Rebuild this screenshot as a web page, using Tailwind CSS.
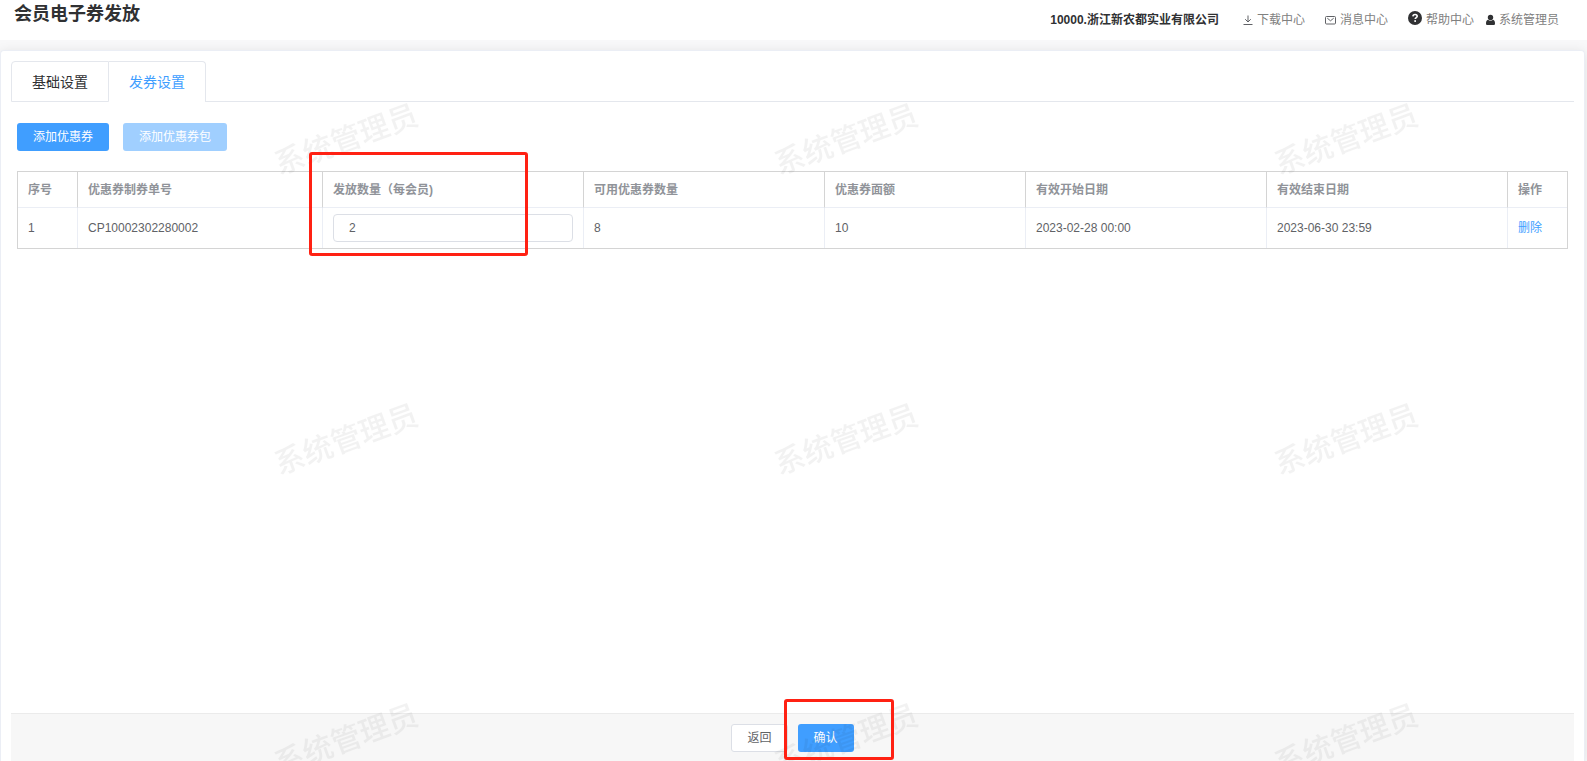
<!DOCTYPE html>
<html lang="zh-CN">
<head>
<meta charset="utf-8">
<meta name="viewport" content="width=device-width, initial-scale=1">
<title>会员电子券发放</title>
<script src="https://cdn.jsdelivr.net/npm/@tailwindcss/browser@4"></script>
</head>
<body class="relative flex min-h-screen flex-col overflow-x-hidden bg-[#f8f8f9] font-['Liberation_Sans','Noto_Sans_CJK_SC',sans-serif] text-xs text-[#606266]">
  <header class="flex h-10 items-center justify-between bg-white pr-7 pl-3.5">
    <h1 class="mb-3 text-lg leading-6 font-bold text-[#303133]">会员电子券发放</h1>
    <nav class="flex items-center leading-4 text-[#808080]">
      <strong class="mr-6 text-[#303133]">10000.浙江新农都实业有限公司</strong>
      <a href="#" class="mr-5 flex items-center gap-1">
        <svg class="size-2.5" viewBox="0 0 10 10" fill="none" stroke="#606266"><path d="M5 .5V7M2.200 4.200 5 7l2.800-2.800M.5 9.500h9"/></svg>下载中心</a>
      <a href="#" class="mr-5 flex items-center gap-1">
        <svg class="h-2.5 w-[11px]" viewBox="0 0 11 10" fill="none" stroke="#606266"><rect x=".5" y="1.500" width="10" height="7.500" rx="1"/><path d="M2.300 3.200 5.500 5.800l3.200-2.600"/></svg>消息中心</a>
      <a href="#" class="mr-3 flex items-center gap-1">
        <svg class="mb-1 size-3.5" viewBox="0 0 14 14"><circle cx="7" cy="7" r="7" fill="#303133"/><path d="M4.900 5.400C5 4.100 5.900 3.500 7.100 3.500c1.200 0 2.100.7 2.100 1.700C9.200 6.500 7.200 6.600 7.200 8.100" fill="none" stroke="#fff" stroke-width="1.600"/><rect x="6.300" y="9.200" width="1.700" height="1.700" fill="#fff"/></svg>帮助中心</a>
      <a href="#" class="flex items-center gap-1">
        <svg class="h-3 w-[9px]" viewBox="0 0 9 12" fill="#303133"><circle cx="4.500" cy="3.500" r="2.700"/><path d="M2 5.800C.6 6.300 0 7.400 0 9.500 0 10.500.6 11 1.500 11h6C8.400 11 9 10.500 9 9.500 9 7.400 8.400 6.300 7 5.800 5.500 7.200 3.500 7.200 2 5.800z"/></svg>系统管理员</a>
    </nav>
  </header>

  <main class="mt-2.5 mr-0.5 flex grow flex-col rounded-t border border-b-0 border-[#ebeef5] bg-white px-2.5 pt-2.5 shadow-[0_2px_12px_rgba(0,0,0,0.1)]">
    <div role="tablist" class="flex text-sm leading-5">
      <button type="button" role="tab" aria-selected="false" class="h-[41px] rounded-tl border border-[#e4e7ed] px-5 text-[#303133]">基础设置</button>
      <button type="button" role="tab" aria-selected="true" class="h-[41px] rounded-tr border-t border-r border-[#e4e7ed] px-5 text-[#409eff]">发券设置</button>
      <div class="grow border-b border-[#e4e7ed]"></div>
    </div>

    <div class="mt-[21px] flex gap-3.5 px-1.5">
      <button type="button" class="h-7 rounded-[3px] bg-[#409eff] px-4 text-white">添加优惠券</button>
      <button type="button" disabled class="h-7 rounded-[3px] bg-[#a0cfff] px-4 text-white">添加优惠券包</button>
    </div>

    <div class="mt-5 mb-10 pr-[7px] pl-1.5">
      <table class="w-full table-fixed border-separate border-spacing-0 border border-[#d4d4d4] text-left">
        <colgroup>
          <col class="w-[60px]"><col class="w-[245px]"><col class="w-[261px]"><col class="w-[241px]"><col class="w-[201px]"><col class="w-[241px]"><col class="w-[241px]"><col class="w-[59px]">
        </colgroup>
        <thead class="text-[#909399]">
          <tr class="h-9">
            <th class="border-r border-b border-r-[#d4d4d4] border-b-[#ebeef5] px-2.5">序号</th>
            <th class="border-r border-b border-r-[#d4d4d4] border-b-[#ebeef5] px-2.5">优惠券制券单号</th>
            <th class="relative border-r border-b border-r-[#d4d4d4] border-b-[#ebeef5] px-2.5"><label for="qty">发放数量（每会员)</label>
              <span class="pointer-events-none absolute -top-5 -left-3.5 z-20 h-[104px] w-[219px] rounded-[3px] border-3 border-[#ff2113]"></span></th>
            <th class="border-r border-b border-r-[#d4d4d4] border-b-[#ebeef5] px-2.5">可用优惠券数量</th>
            <th class="border-r border-b border-r-[#d4d4d4] border-b-[#ebeef5] px-2.5">优惠券面额</th>
            <th class="border-r border-b border-r-[#d4d4d4] border-b-[#ebeef5] px-2.5">有效开始日期</th>
            <th class="border-r border-b border-r-[#d4d4d4] border-b-[#ebeef5] px-2.5">有效结束日期</th>
            <th class="border-b border-[#ebeef5] px-2.5">操作</th>
          </tr>
        </thead>
        <tbody>
          <tr class="h-10">
            <td class="border-r border-[#ebeef5] px-2.5">1</td>
            <td class="border-r border-[#ebeef5] px-2.5">CP10002302280002</td>
            <td class="border-r border-[#ebeef5] px-2.5"><input id="qty" type="text" value="2" class="block h-7 w-full rounded border border-[#dcdfe6] bg-white px-[15px]"></td>
            <td class="border-r border-[#ebeef5] px-2.5">8</td>
            <td class="border-r border-[#ebeef5] px-2.5">10</td>
            <td class="border-r border-[#ebeef5] px-2.5">2023-02-28 00:00</td>
            <td class="border-r border-[#ebeef5] px-2.5">2023-06-30 23:59</td>
            <td class="px-2.5"><button type="button" class="text-[#409eff]">删除</button></td>
          </tr>
        </tbody>
      </table>
    </div>

    <footer class="mt-auto flex h-12 items-start justify-center gap-2.5 border-t border-[#ebebeb] bg-[#f7f7f7] pt-2.5">
      <button type="button" class="h-7 rounded-[3px] border border-[#dcdfe6] bg-white px-[15px]">返回</button>
      <div class="relative">
        <button type="button" class="h-7 rounded-[3px] bg-[#409eff] px-4 text-white">确认</button>
        <span class="pointer-events-none absolute -top-[25px] -left-3.5 z-20 h-[61px] w-[110px] rounded-[3px] border-3 border-[#ff2113]"></span>
      </div>
    </footer>
  </main>

  <svg aria-hidden="true" class="pointer-events-none absolute inset-0 z-10 h-full w-full">
    <defs>
      <pattern id="watermark" width="500" height="300" patternUnits="userSpaceOnUse">
        <text x="346" y="150" transform="rotate(-20 346 139)" text-anchor="middle" class="fill-black/5 font-['Noto_Sans_CJK_SC',sans-serif] text-[30px] font-medium">系统管理员</text>
      </pattern>
    </defs>
    <rect width="100%" height="100%" fill="url(#watermark)"/>
  </svg>
</body>
</html>
